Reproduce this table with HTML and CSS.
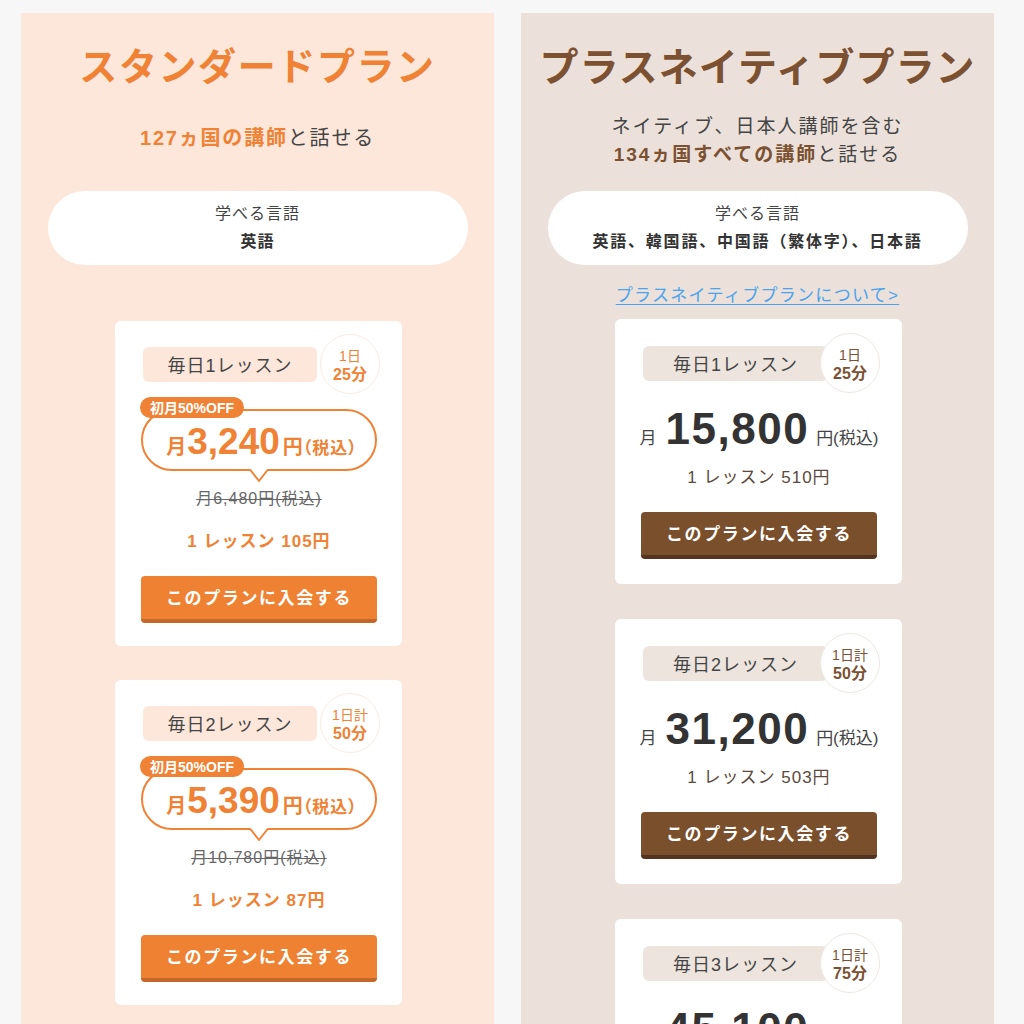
FILE: index.html
```html
<!DOCTYPE html>
<html lang="ja">
<head>
<meta charset="utf-8">
<title>プラン</title>
<link rel="stylesheet" href="styles.css">
</head>
<body>
<div class="page">
  <section class="panel panel-std">
    <h2 class="title title-std">スタンダードプラン</h2>
    <div class="subtitle subtitle-std">
      <p class="sub-line"><strong class="em-std">127ヵ国の講師</strong>と話せる</p>
    </div>
    <div class="lang-pill">
      <p class="lang-label">学べる言語</p>
      <p class="lang-value">英語</p>
    </div>

    <div class="card card-std card-first-std">
      <div class="label-row label-row-std">
        <div class="label label-std">毎日1レッスン</div>
        <div class="badge badge-std"><span class="badge-top">1日</span><span class="badge-bottom">25分</span></div>
      </div>
      <div class="bubble-wrap">
        <span class="tag">初月50%OFF</span>
        <div class="bubble">
          <span class="b-unit">月</span><span class="b-num">3,240</span><span class="b-unit">円</span><span class="b-tax">（税込）</span>
          <svg class="tail" width="20" height="15" viewBox="0 0 20 15"><polygon points="0,0 10,13 20,0" fill="#fff"/><polyline points="1,1.5 10,13 19,1.5" fill="none" stroke="#ef8234" stroke-width="2" stroke-linejoin="round"/></svg>
        </div>
      </div>
      <p class="old-price">月6,480円(税込)</p>
      <p class="per-lesson per-std">1 レッスン 105円</p>
      <a class="btn btn-std">このプランに入会する</a>
    </div>

    <div class="card card-std card-next-std">
      <div class="label-row label-row-std">
        <div class="label label-std">毎日2レッスン</div>
        <div class="badge badge-std"><span class="badge-top">1日計</span><span class="badge-bottom">50分</span></div>
      </div>
      <div class="bubble-wrap">
        <span class="tag">初月50%OFF</span>
        <div class="bubble">
          <span class="b-unit">月</span><span class="b-num">5,390</span><span class="b-unit">円</span><span class="b-tax">（税込）</span>
          <svg class="tail" width="20" height="15" viewBox="0 0 20 15"><polygon points="0,0 10,13 20,0" fill="#fff"/><polyline points="1,1.5 10,13 19,1.5" fill="none" stroke="#ef8234" stroke-width="2" stroke-linejoin="round"/></svg>
        </div>
      </div>
      <p class="old-price">月10,780円(税込)</p>
      <p class="per-lesson per-std">1 レッスン 87円</p>
      <a class="btn btn-std">このプランに入会する</a>
    </div>
  </section>

  <section class="panel panel-plus">
    <h2 class="title title-plus">プラスネイティブプラン</h2>
    <div class="subtitle">
      <p class="sub-line">ネイティブ、日本人講師を含む</p>
      <p class="sub-line"><strong class="em-plus">134ヵ国すべての講師</strong>と話せる</p>
    </div>
    <div class="lang-pill">
      <p class="lang-label">学べる言語</p>
      <p class="lang-value lang-value-long">英語、韓国語、中国語（繁体字）、日本語</p>
    </div>
    <a class="about-link">プラスネイティブプランについて&gt;</a>

    <div class="card card-plus card-first-plus">
      <div class="label-row label-row-plus">
        <div class="label label-plus">毎日1レッスン</div>
        <div class="badge badge-plus"><span class="badge-top">1日</span><span class="badge-bottom">25分</span></div>
      </div>
      <p class="price-line"><span class="p-unit">月</span><span class="p-num">15,800</span><span class="p-unit">円(税込)</span></p>
      <p class="per-lesson per-plus">1 レッスン 510円</p>
      <a class="btn btn-plus">このプランに入会する</a>
    </div>

    <div class="card card-plus card-next-plus">
      <div class="label-row label-row-plus">
        <div class="label label-plus">毎日2レッスン</div>
        <div class="badge badge-plus"><span class="badge-top">1日計</span><span class="badge-bottom">50分</span></div>
      </div>
      <p class="price-line"><span class="p-unit">月</span><span class="p-num">31,200</span><span class="p-unit">円(税込)</span></p>
      <p class="per-lesson per-plus">1 レッスン 503円</p>
      <a class="btn btn-plus">このプランに入会する</a>
    </div>

    <div class="card card-plus card-next-plus">
      <div class="label-row label-row-plus">
        <div class="label label-plus">毎日3レッスン</div>
        <div class="badge badge-plus"><span class="badge-top">1日計</span><span class="badge-bottom">75分</span></div>
      </div>
      <p class="price-line"><span class="p-unit">月</span><span class="p-num">45,100</span><span class="p-unit">円(税込)</span></p>
      <p class="per-lesson per-plus">1 レッスン 501円</p>
      <a class="btn btn-plus">このプランに入会する</a>
    </div>
  </section>
</div>
</body>
</html>
```

FILE: styles.css
```css
* { box-sizing: border-box; }

html, body {
  margin: 0;
  padding: 0;
}

body {
  background: #f7f7f8;
  font-family: "Liberation Sans", "Noto Sans CJK JP", sans-serif;
  color: #444;
}

p { margin: 0; }

.page {
  display: flex;
  gap: 27px;
  padding: 13px 30px 0 21px;
  height: 1024px;
  overflow: hidden;
}

.panel {
  flex: none;
  width: 473px;
  padding-top: 28px;
  display: flex;
  flex-direction: column;
  align-items: center;
}

.panel-std { background: #fde7db; }
.panel-plus { background: #ebe1da; }

.title {
  margin: 0;
  font-weight: 700;
  line-height: 53px;
  white-space: nowrap;
}

.title-std {
  color: #ef8234;
  font-size: 38px;
  letter-spacing: 1.6px;
}

.title-plus {
  color: #7b5131;
  font-size: 39px;
  letter-spacing: 1px;
}

.subtitle {
  margin-top: 19px;
  height: 56px;
  display: flex;
  flex-direction: column;
  justify-content: center;
  align-items: center;
}

.subtitle-std { padding-bottom: 6px; }

.sub-line {
  font-size: 19px;
  line-height: 28px;
  letter-spacing: 2px;
  color: #444;
  white-space: nowrap;
}

.subtitle-std .sub-line {
  font-size: 20px;
  letter-spacing: 1.8px;
}

.em-std { color: #ef8234; font-weight: 700; }
.em-plus { color: #7b5131; font-weight: 700; }

.lang-pill {
  margin-top: 22px;
  width: 420px;
  height: 74px;
  border-radius: 37px;
  background: #fff;
  padding: 9px 0;
  text-align: center;
}

.lang-label {
  font-size: 16px;
  line-height: 28px;
  letter-spacing: 1px;
  color: #444;
}

.lang-value {
  font-size: 16px;
  line-height: 28px;
  letter-spacing: 1px;
  font-weight: 700;
  color: #333;
}

.lang-value-long { letter-spacing: 1.8px; }

.about-link {
  margin-top: 19px;
  font-size: 17px;
  line-height: 24px;
  letter-spacing: 1.3px;
  color: #4aa3ee;
  text-decoration: underline;
  text-underline-offset: 3px;
}

.card {
  flex: none;
  width: 287px;
  background: #fff;
  border-radius: 6px;
  display: flex;
  flex-direction: column;
  align-items: stretch;
  text-align: center;
  margin-left: 2px;
}

.card-std { padding: 13px 25px 23px 26px; }
.card-first-std { margin-top: 56px; }
.card-next-std { margin-top: 34px; }

.card-plus { padding: 14px 25px 25px 26px; }
.card-first-plus { margin-top: 11px; }
.card-next-plus { margin-top: 35px; }

.label-row {
  display: flex;
  align-items: center;
  margin-left: 2px;
  margin-right: -3px;
  height: 60px;
}

.label {
  flex: 1;
  height: 35px;
  border-radius: 6px;
  padding-top: 3px;
  font-size: 18px;
  line-height: 32px;
  letter-spacing: 1px;
  color: #444;
  text-align: center;
  white-space: nowrap;
}

.label-std { background: #fde7db; }
.label-plus { background: #ede4de; }

.badge {
  flex: none;
  position: relative;
  z-index: 1;
  width: 60px;
  height: 60px;
  border-radius: 50%;
  background: #fff;
  display: flex;
  flex-direction: column;
  align-items: center;
  justify-content: center;
  padding-top: 2px;
}

.badge-std {
  margin-left: 3px;
  border: 1px solid #fbebe2;
  color: #ef8234;
}

.badge-plus {
  margin-left: -8px;
  border: 1px solid #efe7e1;
  color: #7b5131;
}

.badge-top {
  font-size: 14px;
  line-height: 18px;
}

.badge-bottom {
  font-size: 16px;
  line-height: 19px;
  font-weight: 700;
}

.bubble-wrap {
  position: relative;
  margin-top: 3px;
  padding-top: 12px;
}

.tag {
  position: absolute;
  top: 0;
  left: -1px;
  z-index: 2;
  height: 21px;
  padding: 1px 10px 0;
  border-radius: 11px;
  background: #ef8234;
  color: #fff;
  font-size: 14px;
  font-weight: 700;
  line-height: 20px;
  white-space: nowrap;
}

.bubble {
  position: relative;
  height: 62px;
  border: 2px solid #ef8234;
  border-radius: 31px;
  display: flex;
  align-items: baseline;
  justify-content: center;
  padding-top: 8px;
  padding-left: 6px;
  color: #ef8234;
  font-weight: 700;
  font-feature-settings: "palt";
  white-space: nowrap;
}

.b-unit { font-size: 20px; }
.b-num { font-size: 37px; line-height: 46px; margin: 0 3px 0 1px; }
.b-tax { font-size: 17px; letter-spacing: 1px; }

.tail {
  position: absolute;
  left: 50%;
  top: calc(100% - 1px);
  margin-left: -10px;
}

.old-price {
  margin-top: 16px;
  font-size: 16px;
  line-height: 24px;
  letter-spacing: 1px;
  color: #666;
  text-decoration: line-through;
  white-space: nowrap;
}

.per-lesson {
  font-size: 17px;
  line-height: 24px;
  letter-spacing: 1px;
  white-space: nowrap;
}

.per-std {
  margin-top: 19px;
  color: #ef8234;
  font-weight: 700;
}

.per-plus {
  margin-top: 9px;
  color: #5b4a3d;
}

.btn {
  display: block;
  margin-top: 22px;
  height: 47px;
  border-radius: 4px;
  padding-top: 2px;
  color: #fff;
  font-size: 17px;
  font-weight: 700;
  letter-spacing: 1.6px;
  line-height: 41px;
  text-align: center;
  white-space: nowrap;
}

.btn-std {
  background: #ef8232;
  border-bottom: 4px solid #c4672b;
}

.btn-plus {
  background: #7a4f2c;
  border-bottom: 4px solid #533420;
}

.price-line {
  margin-top: 8px;
  height: 56px;
  display: flex;
  align-items: baseline;
  justify-content: center;
  white-space: nowrap;
}

.p-unit {
  font-size: 17px;
  color: #444;
}

.p-num {
  font-size: 44px;
  line-height: 56px;
  font-weight: 700;
  letter-spacing: 1.5px;
  color: #333;
  margin: 0 7px 0 9px;
}
```
